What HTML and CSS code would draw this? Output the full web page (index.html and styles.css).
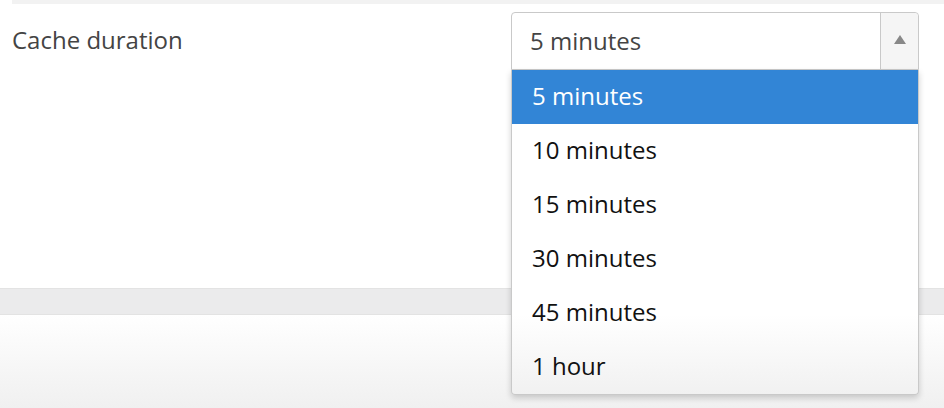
FILE: index.html
```html
<!DOCTYPE html>
<html>
<head>
<meta charset="utf-8">
<link rel="stylesheet" href="styles.css">
</head>
<body>
<div class="page">
  <div class="topbar"></div>
  <div class="content">
    <div class="row">
      <label class="label">Cache duration</label>
      <div class="select">
        <div class="select-box">
          <span class="select-value">5 minutes</span>
          <span class="select-arrow"><span class="tri"></span></span>
        </div>
        <ul class="menu">
          <li class="opt active">5 minutes</li>
          <li class="opt">10 minutes</li>
          <li class="opt">15 minutes</li>
          <li class="opt">30 minutes</li>
          <li class="opt">45 minutes</li>
          <li class="opt">1 hour</li>
        </ul>
      </div>
    </div>
  </div>
  <div class="band"></div>
  <div class="footer"></div>
</div>
</body>
</html>
```
FILE: styles.css
```css
html, body {
  margin: 0;
  padding: 0;
  background: #fff;
  font-family: "Open Sans", "Noto Sans", sans-serif;
}
.page {
  width: 944px;
  height: 408px;
  overflow: hidden;
  display: flex;
  flex-direction: column;
}
.topbar {
  height: 4px;
  margin-left: 12px;
  background: #f2f2f2;
}
.content {
  height: 284px;
}
.row {
  display: flex;
  align-items: center;
  padding: 8px 0 0 12px;
}
.label {
  width: 499px;
  font-size: 24px;
  color: #444;
  padding-bottom: 3px;
}
.select {
  position: relative;
  width: 408px;
}
.select-box {
  display: flex;
  height: 56px;
  border: 1px solid #c9c9c9;
  border-radius: 4px 4px 0 0;
  background: #fff;
}
.select-value {
  flex: 1;
  display: flex;
  align-items: center;
  padding-left: 18px;
  padding-bottom: 2px;
  font-size: 24px;
  color: #444;
}
.select-arrow {
  width: 37px;
  border-left: 1px solid #c9c9c9;
  background: #f5f5f5;
  border-top-right-radius: 4px;
  display: flex;
  align-items: center;
  justify-content: center;
}
.tri {
  width: 0;
  height: 0;
  border-left: 6px solid transparent;
  border-right: 6px solid transparent;
  border-bottom: 9px solid #888;
  margin-top: -4px;
}
.menu {
  position: absolute;
  left: 0;
  right: 0;
  top: 100%;
  margin: 0;
  padding: 0;
  list-style: none;
  border: 1px solid #c9c9c9;
  border-top: none;
  border-radius: 0 0 4px 4px;
  background: linear-gradient(to bottom, #fff 0, #fff 245px, #f1f1f1 100%);
  box-shadow: 0 3px 6px rgba(0, 0, 0, 0.18);
  z-index: 2;
}
.opt {
  height: 54px;
  box-sizing: border-box;
  display: flex;
  align-items: center;
  padding-left: 20px;
  padding-bottom: 4px;
  font-size: 24px;
  color: #111;
}
.opt.active {
  background: #3285d6;
  color: #fff;
}
.band {
  height: 25px;
  border-top: 1px solid #e3e3e3;
  border-bottom: 1px solid #e3e3e3;
  background: #ebebec;
}
.footer {
  flex: 1;
  background: linear-gradient(to bottom, #fff 0, #f0f0f0 100%);
}
```
